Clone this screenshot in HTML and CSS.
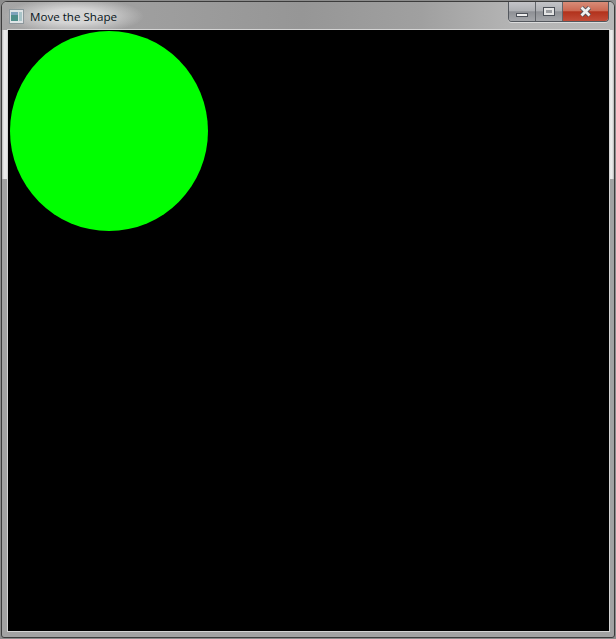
FILE: index.html
```html
<!DOCTYPE html>
<html lang="en">
<head>
    <meta charset="UTF-8">
    <title>Move the Shape</title>
    <link rel="stylesheet" href="styles.css">
</head>
<body>
    <main class="window">
        <header class="titlebar">
            <div class="title-left">
                <svg class="app-icon" width="15" height="15" viewBox="0 0 15 15">
                    <rect x="0.5" y="0.5" width="14" height="14" fill="#dfe4e6" stroke="#8d979c"/>
                    <rect x="2" y="3" width="7" height="9" fill="#4f8f8a"/>
                    <rect x="2" y="3" width="7" height="3" fill="#7fa3bc"/>
                    <rect x="10" y="3" width="3" height="9" fill="#a9c4c8"/>
                </svg>
                <span class="title-text">Move the Shape</span>
            </div>
            <div class="controls">
                <div class="ctl ctl-min"><span class="min-glyph"></span></div>
                <div class="ctl ctl-max"><span class="max-glyph"></span></div>
                <div class="ctl ctl-close">
                    <svg width="13" height="11" viewBox="0 0 13 11">
                        <path d="M2.5 1.5 L10.5 9.5 M10.5 1.5 L2.5 9.5" stroke="#4a4f58" stroke-width="4.4"/>
                        <path d="M2.5 1.5 L10.5 9.5 M10.5 1.5 L2.5 9.5" stroke="#f0f0f0" stroke-width="2.8"/>
                    </svg>
                </div>
            </div>
        </header>
        <div class="canvas">
            <div class="shape"></div>
        </div>
    </main>
</body>
</html>
```

FILE: styles.css
```css
html, body {
    margin: 0;
    height: 100%;
    background: #8c8c8c;
}

.window {
    box-sizing: border-box;
    width: 614px;
    height: 637px;
    margin: 1px;
    padding: 0 5px 6px 6px;
    display: flex;
    flex-direction: column;
    border: 1px solid #3c3c3c;
    border-radius: 6px 6px 3px 3px;
    background:
        linear-gradient(to right, #b8b8b8 0, #ececec 2px, #e6e6e6 5px, #c4c4c4 6px) left top / 6px 177px no-repeat,
        linear-gradient(to left, #b8b8b8 0, #ececec 2px, #e6e6e6 4px, #c4c4c4 5px) right top / 5px 177px no-repeat,
        #a2a2a2;
}

.titlebar {
    height: 28px;
    flex: none;
    display: flex;
    justify-content: space-between;
    align-items: flex-start;
    margin: 0 -5px 0 -6px;
    padding-right: 5px;
    border-radius: 5px 5px 0 0;
    background:
        radial-gradient(ellipse 70px 18px at 72px 14px, rgba(225, 225, 225, 0.8) 40%, rgba(225, 225, 225, 0) 100%),
        linear-gradient(to right, #a6a6a6 0, #969696 300px, #a0a0a0 420px, #b4b4b4 510px, #b8b8b8 100%);
}

.title-left {
    display: flex;
    align-items: center;
    gap: 6px;
    margin: 7px 0 0 7px;
}

.title-text {
    font-family: "Open Sans", sans-serif;
    font-size: 11.6px;
    color: #081420;
}

.controls {
    display: flex;
    height: 19px;
    border: 1px solid #54585e;
    border-top: 0;
    border-radius: 0 0 4px 4px;
    overflow: hidden;
    box-shadow: 0 1px 0 #dcdcdc;
}

.ctl {
    display: flex;
    align-items: center;
    justify-content: center;
    background: linear-gradient(to bottom, #c4c4c8 0, #aeb0b4 45%, #8e9095 52%, #a4a6aa 100%);
}

.ctl-min {
    width: 26px;
    border-right: 1px solid #63666b;
}

.ctl-max {
    width: 26px;
    border-right: 1px solid #63666b;
}

.ctl-close {
    width: 45px;
    background: linear-gradient(to bottom, #d88c78 0, #cc6a54 45%, #b2321c 52%, #c24c38 100%);
}

.min-glyph {
    display: block;
    width: 10px;
    height: 2px;
    margin-top: 7px;
    background: #eeeeee;
    border: 1px solid #4c5058;
}

.max-glyph {
    display: block;
    width: 6px;
    height: 3px;
    border: 2px solid #e4e4e4;
    outline: 1px solid #4c5058;
    background: #9a9ca0;
}

.canvas {
    flex: 1;
    position: relative;
    background: #000;
    box-shadow: 0 0 0 1px #d4d4d4;
}

.shape {
    position: absolute;
    left: 2px;
    top: 1px;
    width: 198px;
    height: 200px;
    border-radius: 50%;
    background: #00ff00;
}
```
